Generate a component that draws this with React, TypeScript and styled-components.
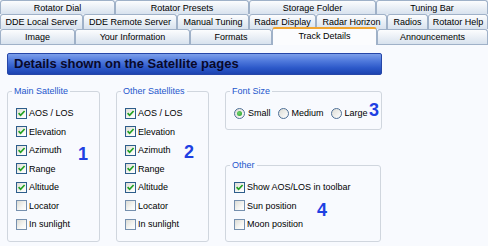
import React from "react";
import styled, { createGlobalStyle } from "styled-components";

const Global = createGlobalStyle`
  html, body { margin: 0; padding: 0; background: #f7f9fd; }
  body { font-family: "Liberation Sans", Arial, sans-serif; font-size: 9px; color: #000; }
  #root { width: 488px; height: 246px; }
`;

const Window = styled.div`
  width: 488px;
  height: 246px;
  overflow: hidden;
  display: flex;
  flex-direction: column;
  background: #f7f9fd;
`;

const TabStrip = styled.div`
  display: flex;
  flex-direction: column;
  position: relative;
  z-index: 2;
`;

const TabRow = styled.div<{ $h: number }>`
  display: flex;
  height: ${(p) => p.$h}px;
`;

const Tab = styled.div<{ $w: number; $selected?: boolean }>`
  box-sizing: border-box;
  flex: none;
  width: ${(p) => p.$w}px;
  border: 1px solid #9fb1c8;
  border-bottom: none;
  border-radius: 3px 3px 0 0;
  background: linear-gradient(#fcfdfe, #d8e2ee);
  display: flex;
  align-items: center;
  justify-content: center;
  white-space: nowrap;
  font-size: 9px;
  color: #000;
  ${(p) =>
    p.$selected &&
    `
    margin-top: -2px;
    height: calc(100% + 3px);
    background: #fbfcfe;
    border-top: 2px solid #f2a630;
    border-color: #f2a630 #9fb1c8 transparent #9fb1c8;
    padding-bottom: 3px;
  `}
`;

const Panel = styled.div`
  flex: 1;
  border-top: 1px solid #9fb1c8;
  background: #f8fafe;
  padding: 8px 0 0 7px;
  position: relative;
  z-index: 1;
`;

const HeaderBar = styled.div`
  box-sizing: border-box;
  width: 375px;
  height: 22px;
  border: 1px solid #2646a8;
  border-radius: 2px;
  background: linear-gradient(#7d9fea, #4f79dc 35%, #2c58c9 70%, #1d43b0);
  padding-left: 6px;
  font-size: 13px;
  font-weight: bold;
  line-height: 20px;
  color: #08082a;
  white-space: nowrap;
`;

const Groups = styled.div`
  display: flex;
  gap: 16px;
  margin-top: 11px;
  align-items: flex-start;
`;

const Column = styled.div`
  display: flex;
  flex-direction: column;
  gap: 30px;
`;

const Group = styled.fieldset<{ $w: number; $h: number }>`
  position: relative;
  box-sizing: border-box;
  margin: 0;
  min-width: 0;
  width: ${(p) => p.$w}px;
  height: ${(p) => p.$h}px;
  border: 1px solid #d0d6de;
  border-radius: 3px;
  padding: 0 0 0 8px;
`;

const Legend = styled.legend`
  color: #2456cc;
  font-size: 9px;
  line-height: 11px;
  padding: 0 2px;
  margin-left: -4px;
`;

const List = styled.div<{ $pt: number }>`
  display: flex;
  flex-direction: column;
  padding-top: ${(p) => p.$pt}px;
`;

const Row = styled.div`
  display: flex;
  align-items: center;
  gap: 2px;
  height: 18.5px;
  white-space: nowrap;
`;

const Inline = styled.div`
  display: flex;
  align-items: center;
  gap: 7px;
  height: 18.5px;
`;

const RadioItem = styled.div`
  display: flex;
  align-items: center;
  gap: 3px;
  white-space: nowrap;
`;

const Box = styled.span<{ $checked: boolean }>`
  box-sizing: border-box;
  flex: none;
  width: 11px;
  height: 11px;
  border: 1px solid ${(p) => (p.$checked ? "#2d5d8b" : "#7690ae")};
  background: linear-gradient(135deg, #dcdcd5, #f6f6f3 60%, #ffffff);
  display: flex;
  align-items: center;
  justify-content: center;
`;

const Circle = styled.span`
  box-sizing: border-box;
  flex: none;
  width: 11px;
  height: 11px;
  border-radius: 50%;
  border: 1px solid #4e6f96;
  background: linear-gradient(135deg, #dcdcd5, #ffffff);
  display: flex;
  align-items: center;
  justify-content: center;
`;

const Dot = styled.span`
  width: 5px;
  height: 5px;
  border-radius: 50%;
  background: radial-gradient(circle at 40% 40%, #6fd46f, #1f9a1f);
`;

const Marker = styled.span<{ $x: number; $y: number }>`
  position: absolute;
  left: ${(p) => p.$x}px;
  top: ${(p) => p.$y}px;
  font-size: 18px;
  font-weight: bold;
  line-height: 1;
  color: #1e40e2;
`;

const Check = ({ checked, label }: { checked: boolean; label: string }) => (
  <Row>
    <Box $checked={checked}>
      {checked && (
        <svg width="9" height="9" viewBox="0 0 9 9">
          <path d="M1.6 4.2 L3.6 6.3 L7.6 2" fill="none" stroke="#22a122" strokeWidth="1.7" />
        </svg>
      )}
    </Box>
    <span>{label}</span>
  </Row>
);

const Radio = ({ checked, label }: { checked: boolean; label: string }) => (
  <RadioItem>
    <Circle>{checked && <Dot />}</Circle>
    <span>{label}</span>
  </RadioItem>
);

const rows: { label: string; w: number; selected?: boolean }[][] = [
  [
    { label: "Rotator Dial", w: 115 },
    { label: "Rotator Presets", w: 134 },
    { label: "Storage Folder", w: 127 },
    { label: "Tuning Bar", w: 112 },
  ],
  [
    { label: "DDE Local Server", w: 83 },
    { label: "DDE Remote Server", w: 94 },
    { label: "Manual Tuning", w: 72 },
    { label: "Radar Display", w: 67 },
    { label: "Radar Horizon", w: 71 },
    { label: "Radios", w: 41 },
    { label: "Rotator Help", w: 60 },
  ],
  [
    { label: "Image", w: 75 },
    { label: "Your Information", w: 115 },
    { label: "Formats", w: 82 },
    { label: "Track Details", w: 105, selected: true },
    { label: "Announcements", w: 111 },
  ],
];
const rowHeights = [14, 15, 15];

const satItems: [string, boolean][] = [
  ["AOS / LOS", true],
  ["Elevation", true],
  ["Azimuth", true],
  ["Range", true],
  ["Altitude", true],
  ["Locator", false],
  ["In sunlight", false],
];

export default function App() {
  return (
    <>
      <Global />
      <Window>
        <TabStrip>
          {rows.map((r, i) => (
            <TabRow key={i} $h={rowHeights[i]}>
              {r.map((t) => (
                <Tab key={t.label} $w={t.w} $selected={t.selected}>
                  {t.label}
                </Tab>
              ))}
            </TabRow>
          ))}
        </TabStrip>
        <Panel>
          <HeaderBar>Details shown on the Satellite pages</HeaderBar>
          <Groups>
            <Group $w={93} $h={156}>
              <Legend>Main Satellite</Legend>
              <List $pt={7}>
                {satItems.map(([l, c]) => (
                  <Check key={l} label={l} checked={c} />
                ))}
              </List>
              <Marker $x={70} $y={48}>1</Marker>
            </Group>
            <Group $w={93} $h={156}>
              <Legend>Other Satellites</Legend>
              <List $pt={7}>
                {satItems.map(([l, c]) => (
                  <Check key={l} label={l} checked={c} />
                ))}
              </List>
              <Marker $x={67} $y={46}>2</Marker>
            </Group>
            <Column>
              <Group $w={157} $h={44}>
                <Legend>Font Size</Legend>
                <List $pt={7}>
                  <Inline>
                    <Radio checked label="Small" />
                    <Radio checked={false} label="Medium" />
                    <Radio checked={false} label="Large" />
                  </Inline>
                </List>
                <Marker $x={143} $y={4}>3</Marker>
              </Group>
              <Group $w={156} $h={82}>
                <Legend>Other</Legend>
                <List $pt={7}>
                  <Check label="Show AOS/LOS in toolbar" checked />
                  <Check label="Sun position" checked={false} />
                  <Check label="Moon position" checked={false} />
                </List>
                <Marker $x={91} $y={30}>4</Marker>
              </Group>
            </Column>
          </Groups>
        </Panel>
      </Window>
    </>
  );
}
